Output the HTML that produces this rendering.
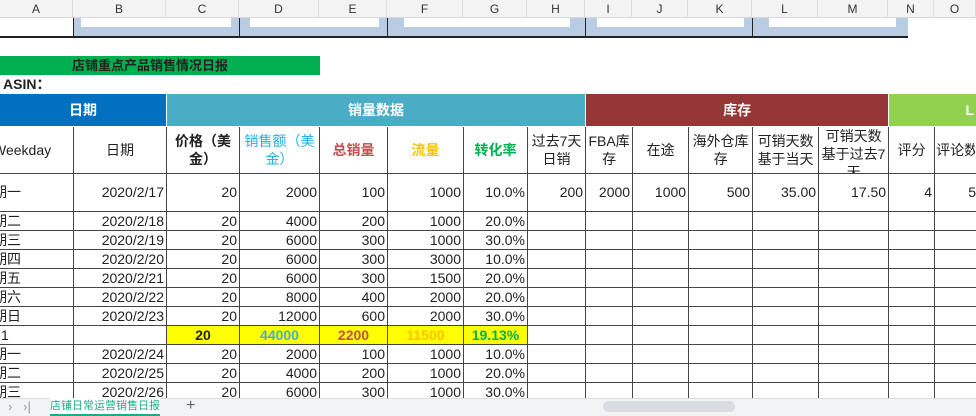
<!DOCTYPE html>
<html><head><meta charset="utf-8"><style>
*{margin:0;padding:0;box-sizing:border-box}
body{width:976px;height:416px;overflow:hidden;background:#fff;font-family:"Liberation Sans","Noto Sans CJK SC",sans-serif;font-size:14px;color:#222;position:relative}
.hdr{position:absolute;top:0;left:0;height:18px;width:976px;background:#f3f3f3;border-bottom:1px solid #d8d8d8}
.hdr div{position:absolute;top:0;height:18px;line-height:18px;text-align:center;font-size:12px;color:#333;border-right:1px solid #ddd}
.box{position:absolute;top:18px;height:19px;background:#b8cce4}
.box i{position:absolute;top:0;left:8px;right:8px;height:9px;background:#fff}
table{position:absolute;top:93px;left:-1px;border-collapse:collapse;table-layout:fixed;width:977px}
td{border:1px solid #444;padding:0 2px;white-space:nowrap;overflow:hidden;text-align:right;height:19px;line-height:17px;font-size:14px}
td.a{text-align:left;padding-left:0;text-indent:-7px}
.band td{height:33px;color:#fff;font-weight:bold;text-align:center;border-color:transparent}
.h td{height:47px;text-align:center;white-space:normal;line-height:18px;padding:0 1px}
.h td div{max-height:46px;overflow:hidden;display:flex;align-items:center;justify-content:center;height:46px}
.h td div.t{align-items:flex-start;padding-top:0}
.tot td{background:#ff0;font-weight:bold}
.tot td.nb{background:#fff}
</style></head><body>
<div class="hdr">
<div style="left:0;width:73px">A</div><div style="left:73px;width:93px">B</div><div style="left:166px;width:73px">C</div><div style="left:239px;width:80px">D</div><div style="left:319px;width:68px">E</div><div style="left:387px;width:76px">F</div><div style="left:463px;width:64px">G</div><div style="left:527px;width:58px">H</div><div style="left:585px;width:47px">I</div><div style="left:632px;width:56px">J</div><div style="left:688px;width:64px">K</div><div style="left:752px;width:66px">L</div><div style="left:818px;width:70px">M</div><div style="left:888px;width:46px">N</div><div style="left:934px;width:42px">O</div>
</div>
<div class="box" style="left:73px;width:166px"><i style="left:8px"></i></div>
<div class="box" style="left:239px;width:148px"><i style="left:11px"></i></div>
<div class="box" style="left:387px;width:198px"><i style="left:17px;right:15px"></i></div>
<div class="box" style="left:585px;width:167px"><i style="left:12px"></i></div>
<div class="box" style="left:752px;width:156px"><i style="left:17px;right:12px"></i></div>
<div style="position:absolute;left:0;top:36px;width:908px;height:2px;background:#222"></div>
<div style="position:absolute;left:73px;top:18px;width:1px;height:19px;background:#222"></div>
<div style="position:absolute;left:239px;top:18px;width:1px;height:19px;background:#222"></div>
<div style="position:absolute;left:387px;top:18px;width:1px;height:19px;background:#222"></div>
<div style="position:absolute;left:585px;top:18px;width:1px;height:19px;background:#222"></div>
<div style="position:absolute;left:752px;top:18px;width:1px;height:19px;background:#222"></div>
<div style="position:absolute;left:0;top:56px;width:320px;height:19px;background:#00b050;font-weight:bold;font-size:13px;line-height:19px;padding-left:72px">店铺重点产品销售情况日报</div>
<div style="position:absolute;left:3px;top:76px;font-weight:bold;font-size:14px;line-height:17px">ASIN：</div>
<table>
<colgroup><col style="width:74px"><col style="width:93px"><col style="width:73px"><col style="width:80px"><col style="width:68px"><col style="width:76px"><col style="width:64px"><col style="width:58px"><col style="width:47px"><col style="width:56px"><col style="width:64px"><col style="width:66px"><col style="width:70px"><col style="width:46px"><col style="width:42px"></colgroup>
<tr class="band"><td colspan="2" style="background:#0070c0">日期</td><td colspan="6" style="background:#4bacc6">销量数据</td><td colspan="5" style="background:#953735">库存</td><td colspan="2" style="background:#92d050;text-align:right">L</td></tr>
<tr class="h"><td style="text-align:left;padding:0"><div style="justify-content:flex-start;margin-left:-7px">Weekday</div></td><td><div>日期</div></td><td style="font-weight:bold"><div>价格（美金）</div></td><td style="color:#1fb0e0"><div>销售额（美金）</div></td><td style="color:#c0504d;font-weight:bold"><div>总销量</div></td><td style="color:#ffc000;font-weight:bold"><div>流量</div></td><td style="color:#00b050;font-weight:bold"><div>转化率</div></td><td><div>过去7天日销</div></td><td><div>FBA库存</div></td><td><div>在途</div></td><td><div>海外仓库存</div></td><td><div>可销天数基于当天</div></td><td><div class="t">可销天数基于过去7天</div></td><td><div>评分</div></td><td style="white-space:nowrap;text-align:left"><div style="justify-content:flex-start">评论数</div></td></tr>
<tr><td class="a" style="height:38px">期一</td><td>2020/2/17</td><td>20</td><td>2000</td><td>100</td><td>1000</td><td>10.0%</td><td>200</td><td>2000</td><td>1000</td><td>500</td><td>35.00</td><td>17.50</td><td>4</td><td style="text-align:right;padding-right:0">5</td></tr>
<tr><td class="a">期二</td><td>2020/2/18</td><td>20</td><td>4000</td><td>200</td><td>1000</td><td>20.0%</td><td></td><td></td><td></td><td></td><td></td><td></td><td></td><td></td></tr>
<tr><td class="a">期三</td><td>2020/2/19</td><td>20</td><td>6000</td><td>300</td><td>1000</td><td>30.0%</td><td></td><td></td><td></td><td></td><td></td><td></td><td></td><td></td></tr>
<tr><td class="a">期四</td><td>2020/2/20</td><td>20</td><td>6000</td><td>300</td><td>3000</td><td>10.0%</td><td></td><td></td><td></td><td></td><td></td><td></td><td></td><td></td></tr>
<tr><td class="a">期五</td><td>2020/2/21</td><td>20</td><td>6000</td><td>300</td><td>1500</td><td>20.0%</td><td></td><td></td><td></td><td></td><td></td><td></td><td></td><td></td></tr>
<tr><td class="a">期六</td><td>2020/2/22</td><td>20</td><td>8000</td><td>400</td><td>2000</td><td>20.0%</td><td></td><td></td><td></td><td></td><td></td><td></td><td></td><td></td></tr>
<tr><td class="a">期日</td><td>2020/2/23</td><td>20</td><td>12000</td><td>600</td><td>2000</td><td>30.0%</td><td></td><td></td><td></td><td></td><td></td><td></td><td></td><td></td></tr>
<tr class="tot"><td class="nb" style="font-weight:normal;text-align:left;padding-left:1px">1</td><td class="nb"></td><td style="text-align:center">20</td><td style="text-align:center;color:#4bacc6">44000</td><td style="text-align:center;color:#c0504d">2200</td><td style="text-align:center;color:#ffc000">11500</td><td style="text-align:center;color:#00b050">19.13%</td><td class="nb"></td><td class="nb"></td><td class="nb"></td><td class="nb"></td><td class="nb"></td><td class="nb"></td><td class="nb"></td><td class="nb"></td></tr>
<tr><td class="a">期一</td><td>2020/2/24</td><td>20</td><td>2000</td><td>100</td><td>1000</td><td>10.0%</td><td></td><td></td><td></td><td></td><td></td><td></td><td></td><td></td></tr>
<tr><td class="a">期二</td><td>2020/2/25</td><td>20</td><td>4000</td><td>200</td><td>1000</td><td>20.0%</td><td></td><td></td><td></td><td></td><td></td><td></td><td></td><td></td></tr>
<tr><td class="a">期三</td><td>2020/2/26</td><td>20</td><td>6000</td><td>300</td><td>1000</td><td>30.0%</td><td></td><td></td><td></td><td></td><td></td><td></td><td></td><td></td></tr>
</table>
<div style="position:absolute;left:0;top:398px;width:976px;height:18px;background:#f2f3f5;border-top:1px solid #ddd"></div>
<div style="position:absolute;left:8px;top:399px;color:#999;font-size:13px">›&nbsp;&nbsp;&nbsp;›|</div>
<div style="position:absolute;left:50px;top:398px;width:110px;height:18px;background:#fff;border-bottom:2px solid #1aad8c;color:#1aad8c;font-size:11px;line-height:16px;text-align:center">店铺日常运营销售日报</div>
<div style="position:absolute;left:186px;top:397px;color:#666;font-size:16px">+</div>
<div style="position:absolute;left:603px;top:401px;width:132px;height:11px;background:#d8dbe0;border-radius:6px"></div>
</body></html>
